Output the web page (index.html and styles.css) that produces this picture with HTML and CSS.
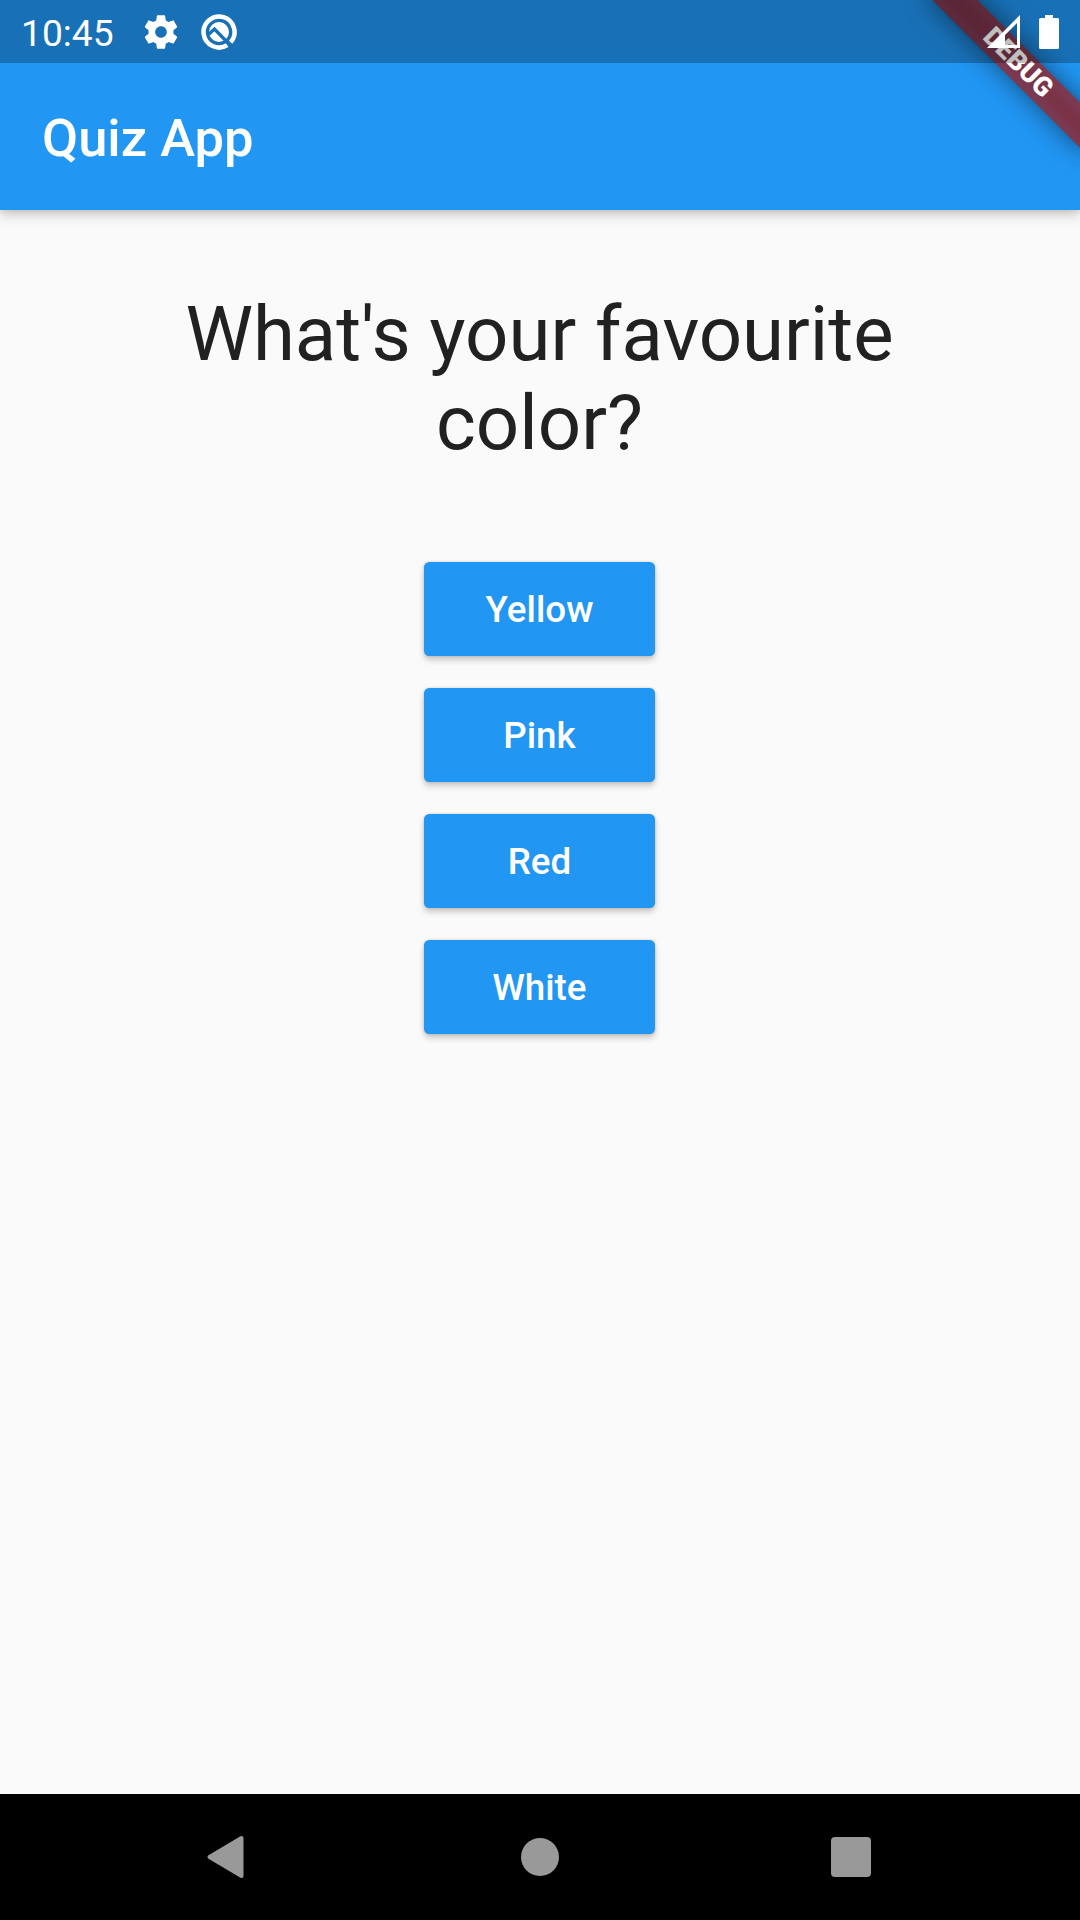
FILE: index.html
```html
<!DOCTYPE html>
<html lang="en">
<head>
<meta charset="utf-8">
<title>Quiz App</title>
<link rel="stylesheet" href="styles.css">
</head>
<body>
<div class="screen">
  <header class="header">
    <div class="status-bar">
      <span class="clock">10:45</span>
      <svg class="icon-gear" viewBox="0 0 24 24"><path d="M19.43 12.98c.04-.32.07-.64.07-.98s-.03-.66-.07-.98l2.11-1.65c.19-.15.24-.42.12-.64l-2-3.46c-.12-.22-.39-.3-.61-.22l-2.49 1c-.52-.4-1.08-.73-1.69-.98l-.38-2.65C14.46 2.18 14.25 2 14 2h-4c-.25 0-.46.18-.49.42l-.38 2.65c-.61.25-1.17.59-1.69.98l-2.49-1c-.23-.09-.49 0-.61.22l-2 3.46c-.13.22-.07.49.12.64l2.11 1.65c-.04.32-.07.65-.07.98s.03.66.07.98l-2.11 1.65c-.19.15-.24.42-.12.64l2 3.46c.12.22.39.3.61.22l2.49-1c.52.4 1.08.73 1.69.98l.38 2.65c.03.24.24.42.49.42h4c.25 0 .46-.18.49-.42l.38-2.65c.61-.25 1.17-.59 1.69-.98l2.49 1c.23.09.49 0 .61-.22l2-3.46c.12-.22.07-.49-.12-.64l-2.11-1.65zM12 15.5c-1.93 0-3.5-1.57-3.5-3.5s1.57-3.5 3.5-3.5 3.5 1.57 3.5 3.5-1.57 3.5-3.5 3.5z"/></svg>
      <svg class="icon-q" viewBox="0 0 38 38">
        <path class="q-ring" d="M27.3 32.1A15.5 15.5 0 1 1 30.6 29.3"/>
        <circle cx="19" cy="19" r="10"/>
        <path class="q-cut" d="M8.5 21.5L14.5 16L29.5 31.5"/>
      </svg>
      <span class="spacer"></span>
      <svg class="icon-signal" viewBox="0 0 34 34"><path fill-rule="evenodd" d="M0 33L33 0V33ZM18 20V30H30V8Z"/></svg>
      <svg class="icon-battery" viewBox="0 0 20 34"><path d="M6 0H14V3H18.5Q20 3 20 4.5V32.5Q20 34 18.5 34H1.5Q0 34 0 32.5V4.5Q0 3 1.5 3H6Z"/></svg>
    </div>
    <h1 class="title">Quiz App</h1>
    <div class="banner"><span class="banner-strip">DEBUG</span></div>
  </header>
  <main class="quiz">
    <p class="question">What's your favourite color?</p>
    <div class="answers">
      <button class="answer">Yellow</button>
      <button class="answer">Pink</button>
      <button class="answer">Red</button>
      <button class="answer">White</button>
    </div>
  </main>
  <nav class="nav-bar">
    <svg viewBox="0 0 48 48"><path class="nav-back" d="M7.5 24L39.5 5V43Z"/></svg>
    <svg viewBox="0 0 48 48"><circle cx="24" cy="24" r="19"/></svg>
    <svg viewBox="0 0 48 48"><rect x="4" y="4" width="40" height="40" rx="4"/></svg>
  </nav>
</div>
</body>
</html>
```
FILE: styles.css
```css
* { box-sizing: border-box; }
body { margin: 0; font-family: Roboto, sans-serif; }
.screen {
  display: flex;
  flex-direction: column;
  width: 1080px;
  height: 1920px;
  overflow: hidden;
  background: #fafafa;
}
.header {
  position: relative;
  flex: none;
  height: 210px;
  background: #2196f3;
  color: #fff;
  box-shadow: 0 5px 12px rgba(0, 0, 0, .2), 0 1px 5px rgba(0, 0, 0, .08);
}
.status-bar {
  position: relative;
  z-index: 2;
  display: flex;
  align-items: center;
  height: 63px;
  padding: 0 21px;
  background: rgba(0, 0, 0, .25);
}
.status-bar svg { flex: none; fill: #fff; }
.clock {
  width: 120px;
  font-size: 37.2px;
  line-height: 63px;
  padding-top: 3px;
}
.status-bar .icon-gear { width: 40px; height: 40px; }
.status-bar .icon-q { width: 38px; height: 38px; margin-left: 19px; }
.q-ring { fill: none; stroke: #fff; stroke-width: 4.5; }
.q-cut { fill: none; stroke: #1a70b6; stroke-width: 3.3; }
.spacer { flex: 1; }
.icon-signal { width: 34px; height: 34px; margin-right: 18px; }
.icon-battery { width: 20px; height: 34px; }
.title {
  margin: 0;
  padding-left: 42px;
  font-size: 52.5px;
  font-weight: 500;
  line-height: 151px;
}
.banner {
  position: absolute;
  z-index: 1;
  top: 0;
  right: 0;
  width: 210px;
  height: 210px;
  overflow: hidden;
}
.banner-strip {
  position: absolute;
  left: 37.5px;
  top: 46.75px;
  width: 220px;
  height: 31.5px;
  transform: rotate(45deg);
  background:
    linear-gradient(rgba(183, 28, 28, .627), rgba(183, 28, 28, .627)),
    linear-gradient(rgba(0, 0, 0, .26), rgba(0, 0, 0, .42) 50%, rgba(0, 0, 0, .26));
  box-shadow: 0 0 26px rgba(0, 0, 0, .5);
  font-size: 26.8px;
  font-weight: 900;
  line-height: 31.5px;
  text-align: center;
}
.quiz {
  flex: 1;
  display: flex;
  flex-direction: column;
  align-items: center;
  padding: 80px 79px 0;
}
.question {
  width: 801px;
  margin: 0;
  padding-right: 1px;
  color: #212121;
  font-size: 76.125px;
  line-height: 89px;
  text-align: center;
}
.answers {
  display: flex;
  flex-direction: column;
  gap: 32px;
  margin: 94px 1px 0 0;
}
.answer {
  width: 231px;
  height: 94px;
  padding: 1px 0 0;
  border: 0;
  border-radius: 5.25px;
  background: #2196f3;
  color: #fff;
  font: 500 36.75px/93px Roboto, sans-serif;
  box-shadow: 0 4px 6px rgba(0, 0, 0, .2), 0 0 3px rgba(0, 0, 0, .16);
}
.nav-bar {
  flex: none;
  display: flex;
  align-items: center;
  justify-content: space-between;
  height: 126px;
  padding: 0 205px;
  background: #000;
}
.nav-bar svg { width: 48px; height: 48px; fill: #999; }
.nav-bar svg:first-child { margin-left: -3px; margin-right: 3px; }
.nav-back { stroke: #999; stroke-width: 4; stroke-linejoin: round; }
```
